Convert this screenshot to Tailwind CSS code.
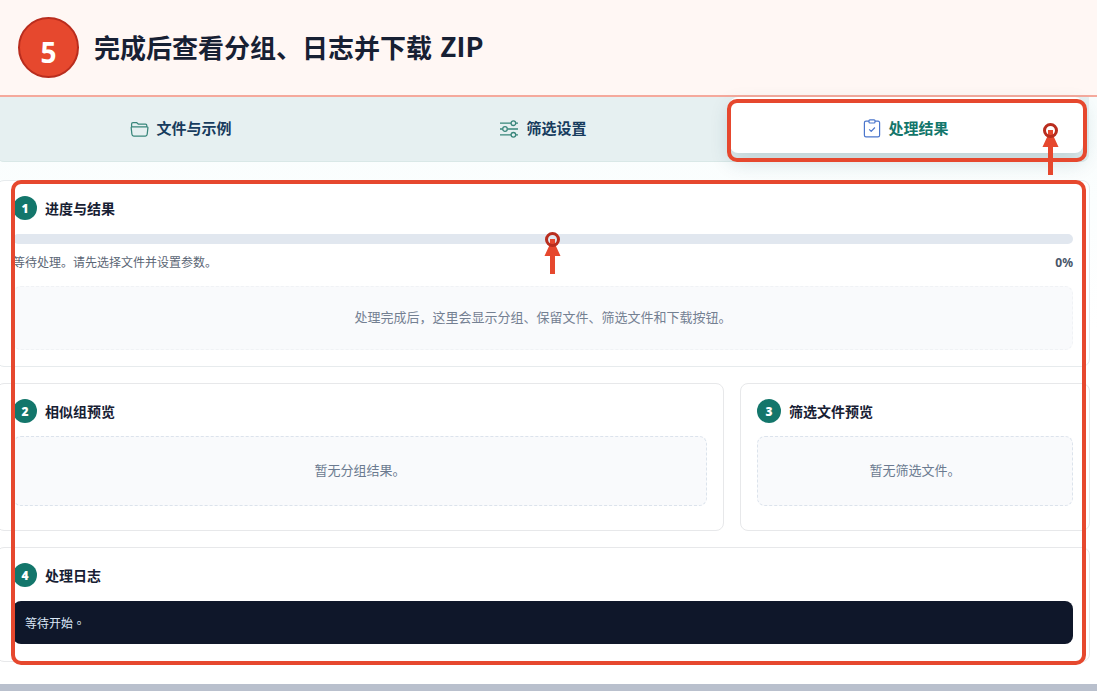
<!DOCTYPE html>
<html lang="zh-CN">
<head>
<meta charset="utf-8">
<title>处理结果</title>
<script src="https://cdn.jsdelivr.net/npm/@tailwindcss/browser@4"></script>
</head>
<body class="relative flex h-[691px] w-[1097px] flex-col overflow-hidden bg-white font-['Noto_Sans','Noto_Sans_CJK_SC',sans-serif] text-[#172033]">
<header class="flex h-[97px] shrink-0 items-center gap-[15px] border-b-2 border-[#f5a99c] bg-[#fff7f4] pl-[18px]">
  <div class="flex size-[61px] items-center justify-center rounded-full border-2 border-[#b92d1e] bg-[#e6482e] pt-[9px] text-[28px] leading-none font-bold text-white">5</div>
  <h1 class="flex items-center text-[26px] leading-[36px] font-bold whitespace-nowrap"><span>完成后查看分组、日志并下载</span><span class="-mt-[3px] ml-[8px] font-['Noto_Sans_CJK_SC',sans-serif] text-[27px]">ZIP</span></h1>
</header>

<main class="-ml-1 flex h-[587px] w-[1101px] shrink-0 flex-col bg-linear-to-b from-[#f8fdfd] to-white to-40% pr-[7px]">
  <nav class="grid h-[65px] w-[1093px] shrink-0 grid-cols-[370px_364px_1fr] rounded-b-lg border-b border-[#d9e8e7] bg-[#e6f0f1] pr-[6px] text-[15px] leading-[22px] font-bold text-[#173c5e]">
    <div class="flex items-center justify-center gap-[7px] pb-px">
      <svg class="h-[18px] w-[19px]" viewBox="0 0 19 18" fill="none" stroke="#39867b" stroke-width="1.25" stroke-linejoin="round"><path d="M1.6 6.500V4Q1.6 2.500 3 2.500h3.500l2 1.700h7q1.300 0 1.300 1.300v1M2 6.800h15q1 0 .9 1.100l-.7 6.400q-.2 1.700-1.800 1.700H3.700Q2.100 16 1.900 14.300l-.7-6.400q-.1-1.100.8-1.100Z"/></svg>
      <span class="-mt-0.5">文件与示例</span>
    </div>
    <div class="flex items-center justify-center gap-[7px] pr-[10px] pb-px">
      <svg class="h-[18px] w-[20px]" viewBox="0 0 20 18" fill="none" stroke="#39867b" stroke-width="1.3"><path d="M1 3.2h11M17 3.2h2M1 9h2.3M8.7 9H19M1 14.8h11M17 14.8h2"/><circle cx="14.4" cy="3.2" r="2.3"/><circle cx="6" cy="9" r="2.3"/><circle cx="14.4" cy="14.8" r="2.3"/></svg>
      <span class="-mt-0.5">筛选设置</span>
    </div>
    <div class="mb-[8px] flex items-center justify-center gap-[7px] rounded-lg bg-white pt-[7px] pr-px text-[#13766b] shadow-[0_9px_20px_#0f4c5c2e]">
      <svg class="h-[19px] w-[18px]" viewBox="0 0 18 19" fill="none" stroke="#4b76cc" stroke-width="1.2" stroke-linejoin="round"><path d="M6 2.2H3Q1.4 2.2 1.4 3.8v12.4q0 1.6 1.6 1.6h12q1.6 0 1.6-1.6V3.8q0-1.6-1.6-1.6h-3"/><rect x="6" y=".8" width="6" height="3.2" rx=".9"/><path d="m6.2 10.3 2 2 3.7-3.8"/></svg>
      <span class="-mt-0.5">处理结果</span>
    </div>
  </nav>

  <div class="mt-[18px] flex w-[1094px] flex-col gap-4">
    <section class="h-[187px] rounded-lg border border-[#e7ebed] bg-white px-4 pt-[15px]">
      <h2 class="flex h-6 items-center gap-2 text-[14px] leading-[20px] font-bold"><span class="flex size-6 items-center justify-center rounded-full bg-[#13766b] pt-px text-[12px] font-black text-white">1</span><span class="pt-0.5">进度与结果</span></h2>
      <div class="mt-[14px] h-[10px] rounded-full bg-[#e1e7ef]"></div>
      <div class="mt-[9px] flex h-5 items-center justify-between text-[12px] leading-5 text-[#5b6675]"><span>等待处理。请先选择文件并设置参数。</span><b class="text-[#475569]">0%</b></div>
      <div class="mt-[13px] flex h-[64px] items-center justify-center rounded-lg border border-dashed border-[#f0f2f5] bg-[#f9fafc] text-[13px] text-[#748092]">处理完成后，这里会显示分组、保留文件、筛选文件和下载按钮。</div>
    </section>

    <div class="grid grid-cols-[728px_350px] gap-4">
      <section class="h-[148px] rounded-lg border border-[#e7e8ea] bg-white px-4 pt-[15px]">
        <h2 class="flex h-6 items-center gap-2 text-[14px] leading-[20px] font-bold"><span class="flex size-6 items-center justify-center rounded-full bg-[#13766b] pt-px text-[12px] font-black text-white">2</span><span class="pt-0.5">相似组预览</span></h2>
        <div class="mt-[13px] flex h-[70px] items-center justify-center rounded-lg border border-dashed border-[#dce3ec] bg-[#f9fafc] text-[13px] text-[#6b7a90]">暂无分组结果。</div>
      </section>
      <section class="h-[148px] rounded-lg border border-[#e7e8ea] bg-white px-4 pt-[15px]">
        <h2 class="flex h-6 items-center gap-2 text-[14px] leading-[20px] font-bold"><span class="flex size-6 items-center justify-center rounded-full bg-[#13766b] pt-px text-[12px] font-black text-white">3</span><span class="pt-0.5">筛选文件预览</span></h2>
        <div class="mt-[13px] flex h-[70px] items-center justify-center rounded-lg border border-dashed border-[#dce3ec] bg-[#f9fafc] text-[13px] text-[#6b7a90]">暂无筛选文件。</div>
      </section>
    </div>

    <section class="h-[115px] rounded-lg border border-[#e7e8ea] bg-white px-4 pt-[15px]">
      <h2 class="flex h-6 items-center gap-2 text-[14px] leading-[20px] font-bold"><span class="flex size-6 items-center justify-center rounded-full bg-[#13766b] pt-px text-[12px] font-black text-white">4</span><span class="pt-0.5">处理日志</span></h2>
      <div lang="zh-TW" class="mt-[14px] flex h-[43px] items-center rounded-lg bg-[#0f172a] px-3 font-['Noto_Sans_CJK_TC',sans-serif] text-[12px] text-[#dce8f8]">等待开始。</div>
    </section>
  </div>
</main>
<footer class="h-[7px] shrink-0 bg-[#b9c0cd]"></footer>

<!-- callout frames and arrows -->
<svg class="pointer-events-none absolute inset-0" width="1097" height="691" viewBox="0 0 1097 691" fill="none" stroke="#e6482e" stroke-width="4">
  <rect x="729" y="101" width="356" height="59" rx="8"/>
  <rect x="13" y="182" width="1071" height="481" rx="8"/>
  <g fill="#e6482e" stroke="none">
    <path d="M1048 130h5v5l5.500 12h-5.500v28h-5v-28h-5.500l5.500-12Z"/>
    <circle cx="1050.5" cy="130.500" r="6" fill="none" stroke="#b92d1e" stroke-width="3"/>
    <path d="M550 239h5v5l5.500 12h-5.500v18h-5v-18h-5.500l5.500-12Z"/>
    <circle cx="552.5" cy="239.500" r="6" fill="none" stroke="#b92d1e" stroke-width="3"/>
  </g>
</svg>
</body>
</html>
